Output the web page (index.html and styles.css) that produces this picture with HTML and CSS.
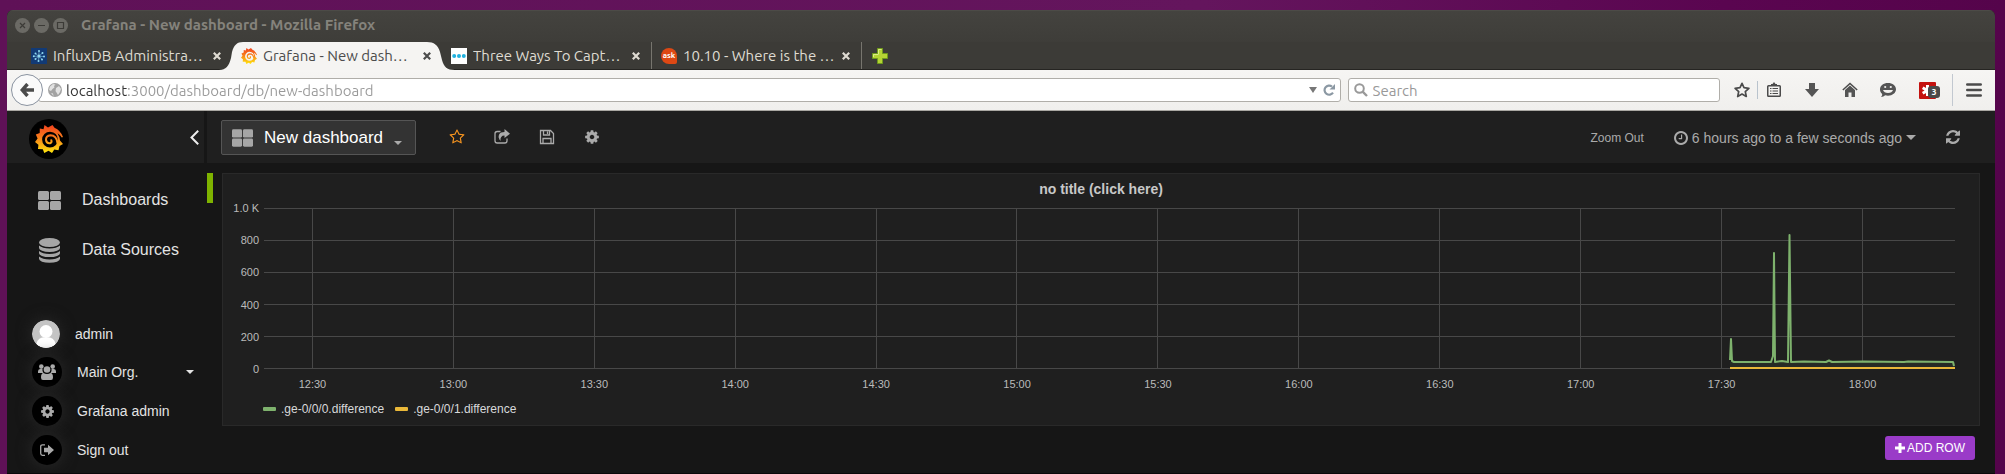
FILE: index.html
```html
<!DOCTYPE html>
<html lang="en">
<head>
<meta charset="utf-8">
<title>Grafana - New dashboard</title>
<link rel="stylesheet" href="styles.css">
</head>
<body>
<svg class="defs" aria-hidden="true">
  <defs>
    <linearGradient id="flame" gradientUnits="userSpaceOnUse" x1="0" y1="0" x2="0" y2="28">
      <stop offset="0" stop-color="#f0431f"/><stop offset=".4" stop-color="#f7761c"/><stop offset="1" stop-color="#ffe60d"/>
    </linearGradient>
    <symbol id="grafana" viewBox="0 0 28 28">
      <path fill="url(#flame)" fill-rule="evenodd" d="M9.500 0 13 2.600 17.500 0 19.500 2.800Q25.500 5.500 28 12L26.800 12.500Q25 9.500 22.500 8.200L24.500 12.500 25 15.500 28 19 24.500 21 23.500 25.200 19.300 24.600 17 28 13.500 25.800 9.300 28 7.800 24.200 3 24 3.400 19.800 0 17 2.600 13.500 .8 9.500 4.700 8 4.800 3.600 8.500 4.200ZM15 6.700A7.900 7.900 0 1 0 22.900 14.600Q22.500 7.200 15 6.700Z"/>
      <path fill="none" stroke="url(#flame)" stroke-width="2" stroke-linecap="round" d="M22.500 18Q21.500 10.300 15.500 10.300 10.800 10.800 11 15 11.500 18.600 15 18.200 17.300 17.300 16.300 15.200"/>
    </symbol>
    <symbol id="tiles" viewBox="0 0 23 19">
      <rect width="11" height="9" rx="1.500"/><rect x="12" width="11" height="9" rx="1.500"/><rect y="10" width="11" height="9" rx="1.500"/><rect x="12" y="10" width="11" height="9" rx="1.500"/>
    </symbol>
    <symbol id="cog" viewBox="0 0 1792 1792"><path d="M1152 896q0-106-75-181t-181-75-181 75-75 181 75 181 181 75 181-75 75-181zm512-109v222q0 12-8 23t-20 13l-185 28q-19 54-39 91 35 50 107 138 10 12 10 25t-9 23q-27 37-99 108t-94 71q-12 0-26-9l-138-108q-44 23-91 38-16 136-29 186-7 28-36 28h-222q-14 0-24.500-8.500t-11.500-21.500l-28-184q-49-16-90-37l-141 107q-10 9-25 9-14 0-25-11-126-114-165-168-7-10-7-23 0-12 8-23 15-21 51-66.500t54-70.500q-27-50-41-99l-183-27q-13-2-21-12.500t-8-23.500v-222q0-12 8-23t19-13l186-28q14-46 39-92-40-57-107-138-10-12-10-24 0-10 9-23 26-36 98.500-107.500t94.500-71.500q13 0 26 10l138 107q44-23 91-38 16-136 29-186 7-28 36-28h222q14 0 24.500 8.500t11.500 21.500l28 184q49 16 90 37l142-107q9-9 24-9 13 0 25 10 129 119 165 170 7 8 7 22 0 12-8 23-15 21-51 66.500t-54 70.500q26 50 41 98l183 28q13 2 21 12.500t8 23.500z"/></symbol>
    <symbol id="close" viewBox="0 0 8 8"><path fill="none" stroke="currentColor" stroke-width="2.200" d="M.8.8l6.400 6.400M7.200.8.8 7.200"/></symbol>
  </defs>
</svg>
<div class="window">
  <header class="titlebar">
    <button class="winbtn" aria-label="Close window"><svg viewBox="0 0 15 15"><path d="M5 5l5 5M10 5l-5 5"/></svg></button>
    <button class="winbtn" aria-label="Minimize"><svg viewBox="0 0 15 15"><path d="M4 7.500h7"/></svg></button>
    <button class="winbtn" aria-label="Maximize"><svg viewBox="0 0 15 15"><path d="M4.500 4.500h6v6h-6z"/></svg></button>
    <span class="wintitle">Grafana - New dashboard - Mozilla Firefox</span>
  </header>

  <div class="tabs">
    <div class="tab">
      <svg class="fav" viewBox="0 0 16 16"><rect width="16" height="16" fill="#123a75"/><g fill="#8fd8f0"><circle cx="8" cy="8" r="1.500"/><circle cx="4.500" cy="5.500" r="1"/><circle cx="8" cy="3" r="1"/><circle cx="11.500" cy="5" r="1"/><circle cx="13" cy="8.500" r="1"/><circle cx="11" cy="11.500" r="1"/><circle cx="7.500" cy="13" r="1"/><circle cx="4.500" cy="11" r="1"/><circle cx="2.800" cy="8.200" r="1"/></g><path stroke="#8fd8f0" stroke-width=".5" d="M4.500 5.500l7 6M11.500 5l-7 6M8 3v5l-.5 5M2.800 8.200 13 8.500"/></svg>
      <button class="tablabel">InfluxDB Administra…</button>
      <button class="tabclose" aria-label="Close tab"><svg><use href="#close"/></svg></button>
    </div>
    <div class="tab active">
      <svg class="tabshape" viewBox="0 0 238 28" preserveAspectRatio="none"><path fill="#f5f4f2" d="M0 28C7 28 10 24 12 16L13 10C15 3 18 0 24 0H208C215 0 219 3 221 10L223 18C225 25 228 28 236 28Z"/></svg>
      <svg class="fav"><use href="#grafana"/></svg>
      <button class="tablabel">Grafana - New dash…</button>
      <button class="tabclose" aria-label="Close tab"><svg><use href="#close"/></svg></button>
    </div>
    <div class="tab ruled">
      <svg class="fav" viewBox="0 0 16 16"><rect width="16" height="16" fill="#fff"/><g fill="#22b3e0"><circle cx="3.200" cy="8" r="2"/><circle cx="8" cy="8" r="2"/><circle cx="12.800" cy="8" r="2"/></g></svg>
      <button class="tablabel">Three Ways To Capt…</button>
      <button class="tabclose" aria-label="Close tab"><svg><use href="#close"/></svg></button>
    </div>
    <div class="tab ruled">
      <span class="fav ask">ask</span>
      <button class="tablabel">10.10 - Where is the …</button>
      <button class="tabclose" aria-label="Close tab"><svg><use href="#close"/></svg></button>
    </div>
    <button class="newtab" aria-label="New tab"><svg viewBox="0 0 16 16"><path fill="#b5d334" stroke="#6f9a1c" d="M5.500.5h5v5h5v5h-5v5h-5v-5h-5v-5h5z"/><path fill="none" stroke="#dcec86" d="M6.500 6V1.500h3M1.500 9V6.500h5"/></svg></button>
  </div>

  <div class="toolbar">
    <button class="back" aria-label="Back"><svg viewBox="0 0 14 14"><path fill="none" stroke="#4b4b4b" stroke-width="3.400" d="M7.500 1 2.200 7l5.300 6M3 7h11"/></svg></button>
    <div class="urlbar">
      <svg class="globe" viewBox="0 0 14 14"><circle cx="7" cy="7" r="7" fill="#a3a3a3"/><path fill="#e2e2e2" d="M2 3.500 5 1l2.500.5L6 3l.5 1.500L4.500 6 3 8 1 7zM8 5l3-2 2 3-1 3-2 3-1.500-2.500L7.500 8zM3 10l2 .5.500 2.500z"/></svg>
      <input class="url" type="text" aria-label="Address" value="localhost:3000/dashboard/db/new-dashboard">
      <button class="plain" aria-label="History"><svg class="drop" viewBox="0 0 8 6"><path fill="#777" d="M0 0h8L4 6z"/></svg></button>
      <button class="plain" aria-label="Reload"><svg class="reload" viewBox="0 0 12 12"><path fill="none" stroke="#8b98a3" stroke-width="2.200" d="M10 8.700A4.600 4.600 0 1 1 9 2.500"/><path fill="#8b98a3" d="M12 0v5.500H6.500z"/></svg></button>
    </div>
    <div class="searchbar">
      <svg class="lens" viewBox="0 0 14 14"><circle cx="5.500" cy="5.500" r="4.300" fill="none" stroke="#999" stroke-width="2"/><path stroke="#999" stroke-width="2.400" d="M8.600 8.600 13 13"/></svg>
      <input class="search" type="text" aria-label="Search" placeholder="Search">
    </div>
    <div class="tools">
      <button class="tool starbtn" aria-label="Bookmark"><svg viewBox="0 0 16 16"><path fill="none" stroke="#4b4b4b" stroke-width="1.700" stroke-linejoin="round" d="M8 1.300l2 4.400 4.900.6-3.600 3.300 1 4.900L8 12.100l-4.300 2.400 1-4.900L1.100 6.300 6 5.700z"/></svg></button>
      <button class="tool" aria-label="Bookmarks list"><svg viewBox="0 0 16 16"><path fill="#4b4b4b" fill-rule="evenodd" d="M5 2h1.500L8 0l1.500 2H11v1h2.500Q15 3 15 4.500v9q0 1.500-1.500 1.500h-11Q1 15 1 13.500v-9Q1 3 2.500 3H5zM2.500 4.500v9h11v-9z"/><path stroke="#4b4b4b" d="M4 6.500h1.500M6.500 6.500H12M4 9h1.500M6.500 9H12M4 11.500h1.500M6.500 11.500H12"/></svg></button>
      <button class="tool" aria-label="Downloads"><svg viewBox="0 0 16 16"><path fill="#555" d="M5 1h6v6h4l-7 8-7-8h4z"/></svg></button>
      <button class="tool" aria-label="Home"><svg viewBox="0 0 16 16"><path fill="none" stroke="#4b4b4b" stroke-width="1.500" d="M.8 8 8 1.500 15.200 8"/><path fill="#555" d="M3 8l5-4.500L13 8v7H9.500v-4.500h-3V15H3z"/></svg></button>
      <button class="tool" aria-label="Hello"><svg viewBox="0 0 16 16"><path fill="#555" d="M8 1c4.500 0 8 2.600 8 6.300s-3.500 6.400-8 6.400c-1 0-2-.1-2.800-.4Q3.500 15 1 15q1.500-1.500 1.200-3C.8 10.900 0 9.200 0 7.300 0 3.600 3.500 1 8 1z"/><g fill="#f2f1ef"><circle cx="5.200" cy="5" r="1.100"/><circle cx="10.800" cy="5" r="1.100"/><path d="M3 8h10q-1 3-5 3T3 8z"/></g></svg></button>
      <button class="tool addon" aria-label="Add-on"><svg viewBox="0 0 17 17"><rect width="17" height="17" rx="1" fill="#c4120f"/><path stroke="#fff" stroke-width="3" d="M8.500 3v11M3.700 5.700l9.600 5.600M13.300 5.700l-9.600 5.600"/></svg><span class="count">3</span></button>
      <button class="tool menu" aria-label="Menu"><svg viewBox="0 0 16 14"><path stroke="#4b4b4b" stroke-width="2.600" stroke-linecap="round" d="M1.300 1.500h13.400M1.300 7h13.400M1.300 12.500h13.400"/></svg></button>
    </div>
  </div>

  <div class="app">
    <aside class="sidebar">
      <div class="brand">
        <a class="logo" href="#" aria-label="Home"><svg><use href="#grafana"/></svg></a>
        <button class="plain" aria-label="Collapse menu"><svg class="chev" viewBox="0 0 9 15"><path fill="none" stroke="#eee" stroke-width="2" d="M8.200.8 1.500 7.500l6.700 6.700"/></svg></button>
      </div>
      <nav class="mainmenu">
        <a href="#"><svg class="tilesicon"><use href="#tiles"/></svg>Dashboards</a>
        <a href="#"><svg class="dbicon" viewBox="0 0 21 25"><ellipse cx="10.500" cy="4.500" rx="10.500" ry="4.500"/><path d="M0 7.500q3.500 3 10.500 3t10.500-3v2.500q0 1.500-3 2.700-3 1.200-7.500 1.200T3 12.700Q0 11.500 0 10zM0 13q3.500 3 10.500 3t10.500-3v2.200q0 1.500-3 2.700-3 1.200-7.500 1.200T3 17.900q-3-1.200-3-2.700zM0 18.400q3.500 3 10.500 3t10.500-3v2.300q0 1.700-3 3-3 1.100-7.500 1.100T3 23.700q-3-1.300-3-3z"/></svg>Data Sources</a>
      </nav>
      <nav class="usermenu">
        <a href="#"><svg class="avatar" viewBox="0 0 28 28"><clipPath id="round"><circle cx="14" cy="14" r="14"/></clipPath><g clip-path="url(#round)"><path fill="#c4c4c4" d="M0 0h28v28H0z"/><g fill="#fff"><circle cx="14" cy="11.500" r="6.500"/><path d="M4 28q0-9 6-10.500h8q6 1.500 6 10.500z"/></g></g></svg>admin</a>
        <a href="#"><span class="disc"><svg class="crew" viewBox="0 0 18 16"><circle cx="3.300" cy="2.600" r="2.300"/><circle cx="14.700" cy="2.600" r="2.300"/><path d="M0 9V7.500Q0 5 2 5h2.500q-.5 2.500 1 4zM18 9V7.500Q18 5 16 5h-2.500q.5 2.500-1 4z"/><circle cx="9" cy="5.500" r="3.300"/><path d="M3 13.500Q3 9 5.500 9q1.500 1 3.500 1t3.500-1Q15 9 15 13.500q0 2.500-2 2.500H5q-2 0-2-2.500z"/></svg></span>Main Org.<i class="caret"></i></a>
        <a href="#"><span class="disc"><svg class="gear"><use href="#cog"/></svg></span>Grafana admin</a>
        <a href="#"><span class="disc"><svg class="exit" viewBox="0 0 14 12"><path fill="none" stroke="#aaa" stroke-width="1.300" d="M5 .8H2.500Q.7.800.7 2.500v7q0 1.800 1.800 1.800H5"/><path d="M4 3.700h4V.8L14 6l-6 5.200V8.300H4z"/></svg></span>Sign out</a>
      </nav>
    </aside>

    <main class="main">
      <div class="topnav">
        <button class="dashpick"><svg><use href="#tiles"/></svg>New dashboard<i class="caret"></i></button>
        <button class="navicon star" aria-label="Star"><svg viewBox="0 0 1792 1792"><path d="M1201 1004l306-297-422-62-189-382-189 382-422 62 306 297-73 421 378-199 377 199zm527-357q0 22-26 48l-363 354 86 500q1 7 1 20 0 50-41 50-19 0-40-12l-449-236-449 236q-22 12-40 12-21 0-31.500-14.500t-10.500-35.500q0-6 2-20l86-500-364-354q-25-27-25-48 0-37 56-46l502-73 225-455q19-41 49-41t49 41l225 455 502 73q56 9 56 46z"/></svg></button>
        <button class="navicon" aria-label="Share"><svg viewBox="0 0 16 16"><path fill="none" stroke="#aaa" stroke-width="1.300" d="M6.500 2.500H3.200Q1 2.500 1 4.700v7.100Q1 14 3.200 14h7.600q2.200 0 2.200-2.200V9.500"/><path d="M10.500 0 16 4.700 10.500 9V6.500Q6 6.500 6.500 12 3.500 8.500 5.200 5.200 6.500 3 10.500 3z"/></svg></button>
        <button class="navicon" aria-label="Save"><svg viewBox="0 0 16 16"><path fill="none" stroke="#aaa" stroke-width="1.300" d="M1.500 1.500h10l3 3v10h-13zM4 14.500v-5h8v5M4.500 1.500v4.500h6V1.500M8.500 2.500v2.500"/></svg></button>
        <button class="navicon" aria-label="Settings"><svg><use href="#cog"/></svg></button>
        <span class="grow"></span>
        <button class="zoomout">Zoom Out</button>
        <button class="timepick"><svg viewBox="128 128 1536 1536"><path d="M1024 544v448q0 14-9 23t-23 9h-320q-14 0-23-9t-9-23v-64q0-14 9-23t23-9h224v-352q0-14 9-23t23-9h64q14 0 23 9t9 23zm416 352q0-148-73-273t-198-198-273-73-273 73-198 198-73 273 73 273 198 198 273 73 273-73 198-198 73-273zm224 0q0 209-103 385.500t-279.500 279.500-385.500 103-385.500-103-279.500-279.500-103-385.500 103-385.500 279.500-279.500 385.500-103 385.500 103 279.500 279.500 103 385.500z"/></svg>6 hours ago to a few seconds ago<i class="caret"></i></button>
        <button class="refresh" aria-label="Refresh"><svg viewBox="128 128 1536 1536"><path d="M1639 1056q0 5-1 7-64 268-268 434.500t-478 166.500q-146 0-282.500-55t-243.500-157l-129 129q-19 19-45 19t-45-19-19-45v-448q0-26 19-45t45-19h448q26 0 45 19t19 45-19 45l-137 137q71 66 161 102t187 36q134 0 250-65t186-179q11-17 53-117 8-23 30-23h192q13 0 22.500 9.500t9.500 22.500zm25-800v448q0 26-19 45t-45 19h-448q-26 0-45-19t-19-45 19-45l138-138q-148-137-349-137-134 0-250 65t-186 179q-11 17-53 117-8 23-30 23h-199q-13 0-22.500-9.500t-9.500-22.500v-7q65-268 270-434.500t480-166.500q146 0 284 55.500t245 156.500l130-129q19-19 45-19t45 19 19 45z"/></svg></button>
      </div>

      <div class="row">
        <button class="rowhandle" aria-label="Row menu"></button>
        <section class="panel">
          <h2>no title (click here)</h2>
          <div class="chart">
            <div class="ylabels"><span>1.0 K</span><span>800</span><span>600</span><span>400</span><span>200</span><span>0</span></div>
            <svg class="plot" viewBox="0 0 1691 161" preserveAspectRatio="none" role="img" aria-label="Interface traffic">
              <g class="grid"><path d="M0 .5H1691M0 32.500H1691M0 64.500H1691M0 96.500H1691M0 128.500H1691M0 160.500H1691"/><path d="M48.500 0V161M189.500 0V161M330.500 0V161M471.500 0V161M612.500 0V161M752.500 0V161M893.500 0V161M1034.500 0V161M1175.500 0V161M1316.500 0V161M1457.500 0V161M1598.500 0V161"/></g>
              <path class="s1fill" d="M1466 154H1691V160H1466z"/>
              <path class="s1" d="M1466 152 1467 131 1468 153 1470 154H1507L1509 148 1510 45 1511 154 1518 153 1524 154 1525.500 27 1527 154 1540 153.500 1562 154 1565 152.500 1568 154 1600 153.500 1640 154 1644 153.500 1689 154 1690 158"/>
              <path class="s2" d="M1466 160H1691"/>
            </svg>
            <div class="xlabels"><span>12:30</span><span>13:00</span><span>13:30</span><span>14:00</span><span>14:30</span><span>15:00</span><span>15:30</span><span>16:00</span><span>16:30</span><span>17:00</span><span>17:30</span><span>18:00</span></div>
          </div>
          <div class="legend"><span class="key green">.ge-0/0/0.difference</span><span class="key amber">.ge-0/0/1.difference</span></div>
        </section>
      </div>
      <div class="addbar"><button class="addrow"><svg viewBox="0 0 10 10"><path fill="#fff" d="M3.500 0h3v3.500H10v3H6.500V10h-3V6.500H0v-3h3.500z"/></svg>ADD ROW</button></div>
    </main>
  </div>
</div>
</body>
</html>
```
FILE: styles.css
```css
* { box-sizing: border-box; }
body {
  margin: 0;
  min-height: 100vh;
  padding: 10px 10px 0 7px;
  display: flex;
  background: linear-gradient(to right, #5f1157, #64155d 60%, #5a0550 86%, #55044b);
  font-family: "Liberation Sans", Arial, sans-serif;
}
button, input { font: inherit; color: inherit; border: 0; padding: 0; margin: 0; background: none; }
input { outline: 0; min-width: 0; }
a { color: inherit; text-decoration: none; }
svg { display: block; flex: none; fill: currentColor; }
.defs { position: absolute; width: 0; height: 0; }
.grow { flex: 1; }
.plain { display: flex; }

.window {
  flex: 1;
  min-width: 0;
  display: flex;
  flex-direction: column;
  border-radius: 6px 6px 0 0;
  overflow: hidden;
  background: #161616;
  border-bottom: 1px solid #0a080a;
}

/* browser frame */
.titlebar, .tabs, .toolbar { font-family: Ubuntu, "Noto Sans", sans-serif; }
.titlebar {
  height: 32px;
  padding: 0 8px 2px;
  display: flex;
  align-items: center;
  gap: 4px;
  background: linear-gradient(#44433f, #3e3d39);
  box-shadow: inset 0 1px #4c4b47;
}
.winbtn { width: 15px; height: 15px; border-radius: 50%; background: #6b6a65; }
.winbtn svg { width: 15px; height: 15px; fill: none; stroke: #3c3b37; stroke-width: 1.2; }
.wintitle { margin-left: 9px; font-size: 15px; line-height: 20px; font-weight: 700; color: #85837c; }

.tabs {
  height: 28px;
  padding-left: 15px;
  display: flex;
  background: #3c3b37;
  border-bottom: 1px solid #262522;
  color: #dfdbd2;
  font-size: 15px;
  line-height: 20px;
}
.tab {
  position: relative;
  width: 210px;
  padding: 0 11px 0 9px;
  display: flex;
  align-items: center;
  gap: 6px;
}
.tab > * { position: relative; }
.tab.ruled { border-right: 1px solid #77756e; }
.tab .tabshape { position: absolute; left: -13px; top: 0; width: 238px; height: 28px; }
.tab.active { color: #4c4c4c; z-index: 1; }
.fav { width: 16px; height: 16px; flex: none; }
.ask { border-radius: 50% 50% 2px 50%; background: #dd4814; color: #fff; font-size: 8px; font-weight: 700; line-height: 15px; text-align: center; }
.tablabel { flex: 1; min-width: 0; text-align: left; white-space: nowrap; overflow: hidden; }
.tabclose svg { width: 8px; height: 8px; }
.newtab { margin-left: 10px; }
.newtab svg { width: 16px; height: 16px; }

.toolbar {
  height: 41px;
  padding-left: 4px;
  display: flex;
  align-items: center;
  background: linear-gradient(#f6f5f3, #f0efed);
  border-bottom: 1px solid #a9a7a2;
  font-size: 15px;
  color: #999;
}
.back {
  position: relative;
  width: 32px;
  height: 32px;
  flex: none;
  border: 1px solid #8a93a0;
  border-radius: 50%;
  background: #fafafa;
  display: grid;
  place-items: center;
}
.back svg { width: 14px; height: 14px; }
.urlbar, .searchbar {
  height: 24px;
  min-width: 0;
  display: flex;
  align-items: center;
  background: #fff;
  border: 1px solid #b0aea9;
  border-radius: 3px;
}
.urlbar { flex: 1328; margin-left: -5px; padding: 0 5px 0 9px; gap: 4px; }
.searchbar { flex: 372; margin-left: 7px; padding: 0 5px; gap: 5px; }
.globe { width: 14px; height: 14px; }
.url {
  flex: 1;
  background: linear-gradient(to right, #333 0 62px, #999 62px);
  background-clip: text;
  -webkit-background-clip: text;
  color: transparent;
}
.drop { width: 8px; height: 6px; }
.reload { width: 12px; height: 12px; margin-left: 2px; }
.lens { width: 14px; height: 14px; }
.search { flex: 1; }
.search::placeholder { color: #999; opacity: 1; }
.tools { display: flex; align-items: center; padding-left: 7px; }
.tool { width: 38px; height: 24px; display: grid; place-items: center; }
.tool svg { width: 16px; height: 16px; }
.starbtn { width: 31px; border-right: 1px solid #b9c3cd; height: 18px; margin-right: -3px; }
.addon { position: relative; width: 45px; padding-right: 5px; }
.addon svg { width: 17px; height: 17px; }
.count { position: absolute; left: 21px; top: 8px; width: 12px; height: 12px; border-radius: 3px; background: #4a4a4a; color: #fff; font-size: 9px; font-weight: 700; line-height: 12px; }
.menu { width: 43px; height: 32px; border-left: 1px solid #c2c8d0; }
.menu svg { height: 14px; }

/* dashboard */
.app { flex: 1; display: flex; color: #e3e3e3; }
.sidebar { width: 197px; flex: none; }
.brand {
  height: 52px;
  padding: 0 5px 0 22px;
  display: flex;
  align-items: center;
  justify-content: space-between;
  background: #1f1f1f;
}
.logo { width: 40px; height: 40px; margin-top: 4px; border-radius: 50%; background: #000; display: grid; place-items: center; }
.logo svg { width: 28px; height: 30px; }
.chev { width: 9px; height: 15px; }
.mainmenu { padding-top: 12px; display: grid; font-size: 16px; }
.mainmenu a { height: 50px; padding-left: 31px; display: flex; align-items: center; gap: 21px; }
.mainmenu svg { color: #a6a6a6; }
.tilesicon { width: 23px; height: 19px; }
.dbicon { width: 21px; height: 25px; margin-left: 1px; margin-right: 1px; }
.usermenu { padding: 45px 10px 8px 25px; display: grid; gap: 9px; font-size: 14px; }
.usermenu a { display: flex; align-items: center; gap: 15px; }
.avatar { width: 28px; height: 28px; }
.avatar, .disc { border-radius: 50%; box-shadow: 0 0 14px 2px #252525; }
.disc { width: 30px; height: 30px; background: #000; color: #aaa; display: grid; place-items: center; }
.crew { width: 18px; height: 16px; }
.gear { width: 15px; height: 15px; }
.exit { width: 14px; height: 12px; }
.caret { width: 0; border: 4px solid transparent; border-top-color: currentColor; border-bottom: 0; }
.usermenu .caret { margin-left: auto; }

.main { flex: 1; min-width: 0; margin-left: 3px; }
.topnav {
  height: 52px;
  padding: 0 35px 0 14px;
  display: flex;
  align-items: center;
  background: #1f1f1f;
  color: #aaa;
}
.dashpick {
  height: 35px;
  margin-right: 18px;
  padding: 2px 13px 0 10px;
  display: flex;
  align-items: center;
  gap: 11px;
  background: #333;
  border: 1px solid #555;
  border-radius: 2px;
  color: #fff;
  font-size: 17px;
}
.dashpick svg { width: 21px; height: 18px; color: #a6a6a6; }
.dashpick .caret { margin-top: 10px; color: #aaa; }
.navicon { width: 45px; height: 30px; display: grid; place-items: center; }
.navicon svg { width: 16px; height: 16px; }
.star { color: #f79520; }
.zoomout { margin-right: 30px; padding-top: 1px; font-size: 12px; }
.timepick { margin-right: 30px; padding-top: 1px; display: flex; align-items: center; gap: 4px; font-size: 14px; }
.timepick svg, .refresh svg { width: 14px; height: 14px; }
.timepick .caret { border-width: 5px; border-bottom: 0; }

.row { margin-top: 10px; padding-right: 15px; display: flex; align-items: flex-start; gap: 9px; }
.rowhandle { width: 6px; height: 30px; background: #7eb300; }
.panel { flex: 1; min-width: 0; background: #1f1f1f; border: 1px solid #292929; padding: 5px 24px 8px 8px; }
.panel h2 { margin: 0 -16px 0 0; font-size: 14px; line-height: 20px; text-align: center; color: #c8c8c8; }
.chart {
  padding-top: 9px;
  display: grid;
  grid-template-columns: 28px 1fr;
  column-gap: 5px;
  color: #bbb;
  font-size: 11px;
  line-height: 16px;
}
.ylabels { margin: -8px 0; height: 177px; display: flex; flex-direction: column; justify-content: space-between; text-align: right; }
.plot { width: 100%; height: 161px; fill: none; overflow: visible; }
.plot path { vector-effect: non-scaling-stroke; }
.grid { stroke: #484848; stroke-width: 1; }
.s1 { stroke: #7eb26d; stroke-width: 2; stroke-linejoin: round; }
.s1fill { fill: #272b25; }
.s2 { stroke: #eab839; stroke-width: 2; }
.xlabels { grid-column: 2; margin: 7px 22px 0 -22px; display: grid; grid-template-columns: repeat(12, 1fr); text-align: center; }
.legend { padding: 9px 0 0 32px; display: flex; gap: 11px; font-size: 12px; line-height: 16px; color: #d8d9da; }
.key { display: flex; align-items: center; gap: 5px; }
.key::before { content: ""; width: 13px; height: 4px; border-radius: 1px; }
.green::before { background: #7eb26d; }
.amber::before { background: #eab839; }

.addbar { padding: 10px 20px 0; display: flex; justify-content: flex-end; }
.addrow { height: 24px; padding: 0 10px; display: flex; align-items: center; gap: 2px; border-radius: 3px; background: #9a3bc8; color: #fff; font-size: 12px; }
.addrow svg { width: 10px; height: 10px; }
```
